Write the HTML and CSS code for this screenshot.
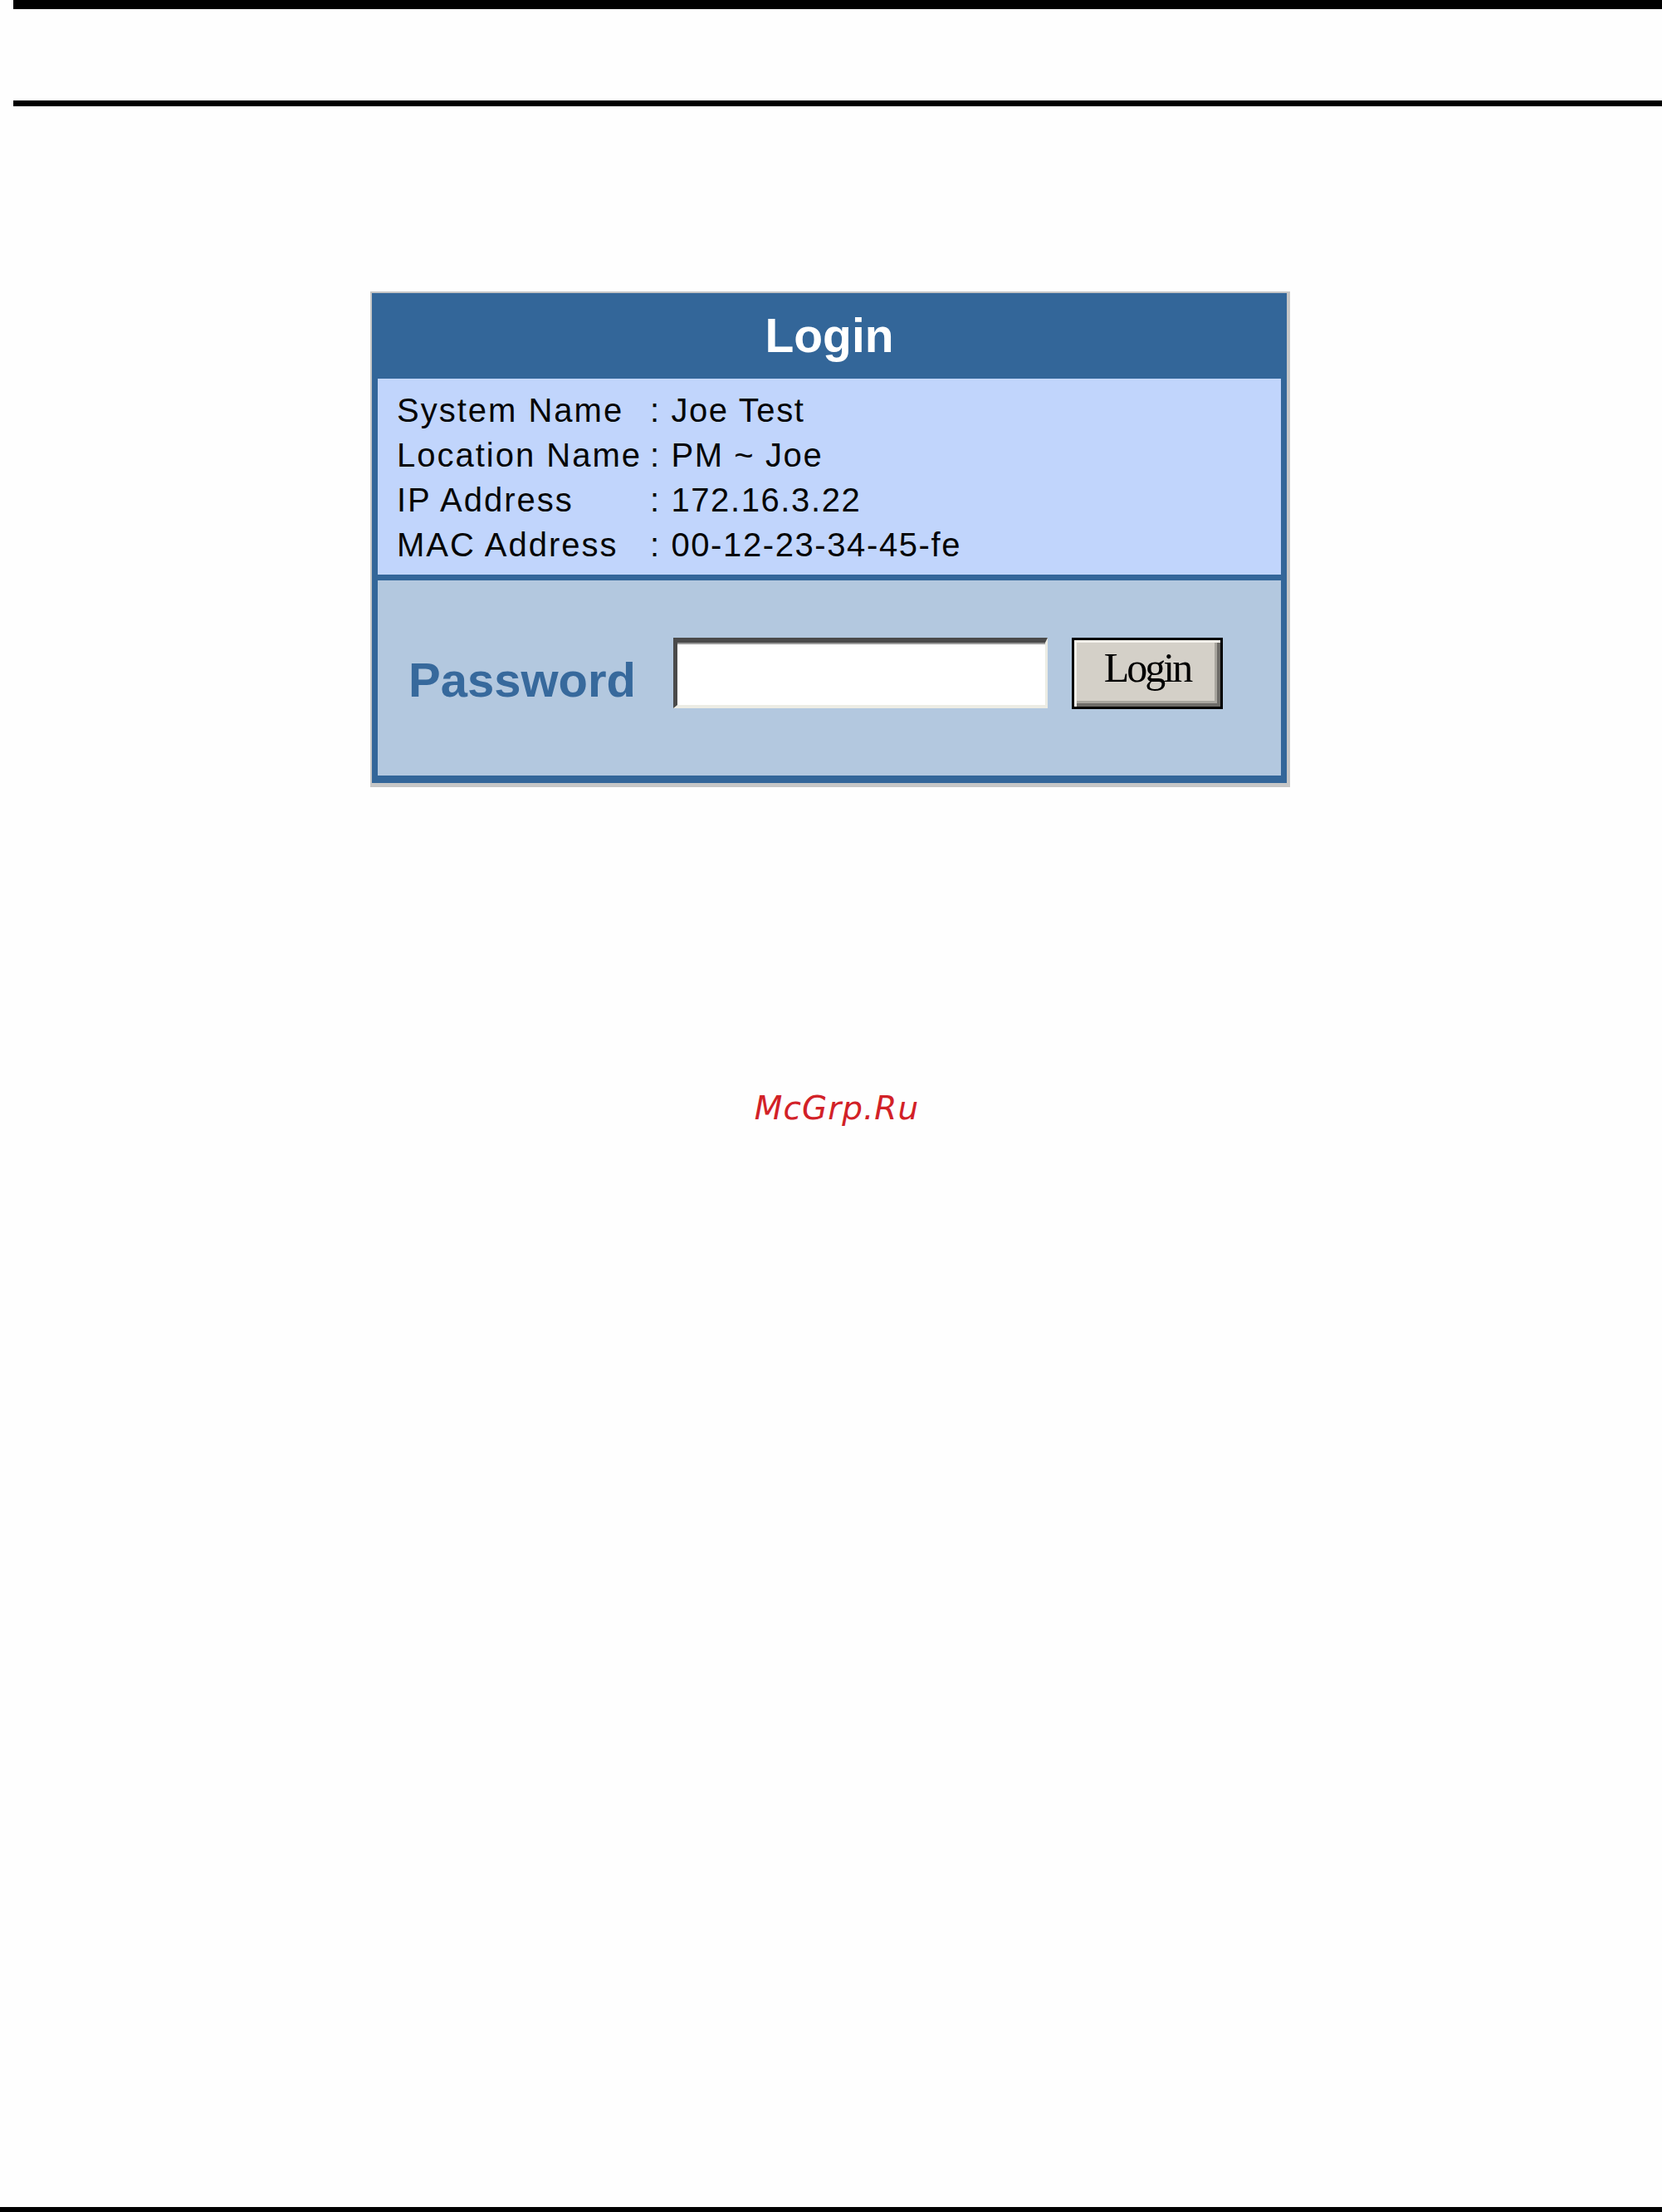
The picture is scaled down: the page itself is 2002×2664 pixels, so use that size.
FILE: index.html
```html
<!DOCTYPE html>
<html lang="en">
<head>
<meta charset="utf-8">
<title>Login</title>
<link rel="stylesheet" href="styles.css">
</head>
<body>
<div class="page">
  <div class="rule rule-top"></div>
  <div class="rule rule-mid"></div>
  <main class="content">
    <div class="login-frame">
      <div class="login-box">
        <div class="login-header">Login</div>
        <div class="info-panel">
          <div class="info-label">System Name</div><div class="info-value">: Joe Test</div>
          <div class="info-label">Location Name</div><div class="info-value">: PM ~ Joe</div>
          <div class="info-label">IP Address</div><div class="info-value">: 172.16.3.22</div>
          <div class="info-label">MAC Address</div><div class="info-value">: 00-12-23-34-45-fe</div>
        </div>
        <div class="form-panel">
          <label class="pw-label" for="pw">Password</label>
          <input class="pw-input" id="pw" type="password">
          <button class="login-btn" type="button">Login</button>
        </div>
      </div>
    </div>
  </main>
  <div class="watermark">McGrp.Ru</div>
  <div class="rule rule-bottom"></div>
</div>
</body>
</html>
```
FILE: styles.css
```css
html, body {
  margin: 0;
  padding: 0;
  background: #fefefe;
}
.page {
  min-height: 2664px;
  display: flex;
  flex-direction: column;
  font-family: "Liberation Sans", Arial, sans-serif;
}
.rule {
  background: #000;
}
.rule-top {
  height: 11px;
  margin-left: 16px;
}
.rule-mid {
  height: 7px;
  margin-top: 110px;
  margin-left: 16px;
}
.content {
  padding-top: 223px;
  padding-left: 446px;
}
.login-frame {
  width: 1102px;
  border-style: solid;
  border-color: #c6c6c6;
  border-width: 2px 4px 5px 2px;
}
.login-box {
  background: #336699;
  padding: 0 7px 9px 7px;
}
.login-header {
  height: 103px;
  color: #fff;
  font-weight: bold;
  font-size: 57px;
  line-height: 62px;
  padding-top: 20px;
  box-sizing: border-box;
  text-align: center;
}
.info-panel {
  background: #c1d5fc;
  height: 236px;
  box-sizing: border-box;
  padding: 11px 0 0 23px;
  display: grid;
  grid-template-columns: 305px 1fr;
  align-content: start;
  font-size: 40px;
  line-height: 54px;
  letter-spacing: 2px;
  color: #050505;
}
.info-value {
  letter-spacing: 1.6px;
}
.form-panel {
  margin-top: 7px;
  background: #b3c8df;
  height: 235px;
  box-sizing: border-box;
  padding: 69px 0 0 37px;
  display: flex;
  align-items: flex-start;
}
.pw-label {
  color: #37699c;
  font-weight: bold;
  font-size: 58px;
  line-height: 85px;
  padding-top: 8px;
  letter-spacing: 0;
}
.pw-input {
  margin: 0 0 0 45px;
  width: 451px;
  height: 85px;
  box-sizing: border-box;
  background: #fff;
  border-style: solid;
  border-width: 6px 3px 4px 5px;
  border-color: #4a4a4a #ecece4 #ecece4 #4a4a4a;
  box-shadow: inset 0 2px 0 #9a9a9a;
  padding: 0;
  outline: none;
}
.login-btn {
  margin-left: 29px;
  width: 182px;
  height: 86px;
  box-sizing: border-box;
  background: #d4d0c8;
  border: 3px solid #000;
  box-shadow: inset 3px 3px 0 #f2f0ea, inset -4px -4px 0 #6e6c68, inset -7px -7px 0 #a8a59e;
  font-family: "Liberation Serif", "Times New Roman", serif;
  font-size: 50px;
  letter-spacing: -3px;
  color: #000;
  padding: 0 0 14px 0;
  line-height: 1;
}
.watermark {
  margin-top: 364px;
  text-align: center;
  padding-left: 14px;
  font-family: "DejaVu Sans", sans-serif;
  font-style: oblique;
  font-size: 39px;
  letter-spacing: 1px;
  color: #d22127;
  line-height: 46px;
}
.rule-bottom {
  margin-top: auto;
  height: 6px;
}
```
